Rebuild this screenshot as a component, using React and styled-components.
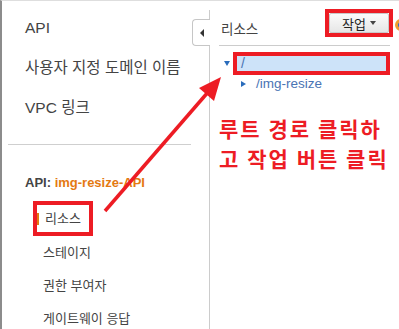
import React from 'react';
import styled, { createGlobalStyle } from 'styled-components';

const GlobalStyle = createGlobalStyle`
  body {
    margin: 0;
    overflow: hidden;
    background: #fff;
    font-family: "Liberation Sans", "Noto Sans CJK KR", sans-serif;
  }
`;

const RED = '#ed1c24';

const Page = styled.div`
  position: relative;
  display: flex;
  width: 399px;
  height: 329px;
  box-sizing: border-box;
  border-top: 1px solid #dedede;
  border-left: 2px solid #8c8c8c;
  overflow: hidden;
`;

const Sidebar = styled.nav`
  width: 207px;
  flex-shrink: 0;
  padding-top: 7px;
  box-sizing: border-box;
`;

const MainLink = styled.div`
  height: 40px;
  line-height: 40px;
  padding-left: 23px;
  font-size: 15.5px;
  color: #444;
  white-space: nowrap;
`;

const Divider = styled.hr`
  margin: 16px 0 0 6px;
  width: 183px;
  border: 0;
  border-top: 1px solid #cfcfcf;
`;

const ApiTitle = styled.div`
  margin-top: 30px;
  padding-left: 23px;
  font-size: 13px;
  font-weight: bold;
  color: #444;
  white-space: nowrap;

  span {
    color: #e47911;
  }
`;

const SubList = styled.div`
  margin-top: 12px;
  display: flex;
  flex-direction: column;
`;

const SubItem = styled.div`
  height: 33px;
  display: flex;
  align-items: center;
  padding-left: 41px;
  font-size: 13px;
  color: #444;
  white-space: nowrap;
`;

const Marked = styled.div`
  margin-left: -10px;
  height: 27px;
  padding: 0 8px 0 0;
  border: 4px solid ${RED};
  display: flex;
  align-items: center;
`;

const ActiveText = styled.span`
  border-left: 2px solid #e47911;
  padding-left: 6px;
  line-height: 12px;
`;

const Main = styled.section`
  position: relative;
  flex: 1;
  margin-top: 9px;
  border-left: 1px solid #cccccc;
  padding: 0 9px 0 9px;
`;

const CollapseTab = styled.div`
  position: absolute;
  left: -18px;
  top: 9px;
  width: 17px;
  height: 25px;
  border: 1px solid #c6c6c6;
  border-right: 0;
  border-radius: 4px 0 0 4px;
  background: #fff;
  display: flex;
  align-items: center;
  justify-content: center;

  &::after {
    content: '';
    border-top: 4px solid transparent;
    border-bottom: 4px solid transparent;
    border-right: 4px solid #333;
  }
`;

const Header = styled.header`
  height: 35px;
  display: flex;
  align-items: flex-start;
  justify-content: space-between;
  border-bottom: 1px solid #cccccc;
  padding-left: 2px;
`;

const HeaderTitle = styled.h2`
  margin: 8px 0 0;
  font-size: 13.5px;
  font-weight: normal;
  color: #444;
`;

const ButtonMark = styled.div`
  margin-top: -1px;
  margin-right: -3px;
  border: 4px solid ${RED};
  display: flex;
`;

const ActionButton = styled.button`
  width: 60px;
  height: 20px;
  padding: 0;
  border: 1px solid #c9c9c9;
  border-radius: 2px;
  background: linear-gradient(#fbfbfb, #e6e6e6);
  font-family: inherit;
  font-size: 13px;
  color: #222;
  display: flex;
  align-items: center;
  justify-content: center;
  gap: 4px;

  &::after {
    content: '';
    border-left: 3.5px solid transparent;
    border-right: 3.5px solid transparent;
    border-top: 4px solid #444;
  }
`;

const StatusDot = styled.div`
  position: absolute;
  right: -8px;
  top: 9px;
  width: 12px;
  height: 12px;
  border-radius: 50%;
  background: radial-gradient(circle, #2f6fc6 0 2.5px, #f0a030 3.5px);
`;

const Tree = styled.div`
  padding-top: 6px;
`;

const TreeRow = styled.div`
  display: flex;
  align-items: center;
  height: ${p => p.$h}px;
  padding-left: ${p => p.$indent}px;
`;

const Caret = styled.span`
  width: 0;
  height: 0;
  margin-right: ${p => p.$gap}px;
  ${p => p.$open
    ? `border-left: 3.5px solid transparent; border-right: 3.5px solid transparent; border-top: 5px solid #2a6cbb;`
    : `border-top: 3.5px solid transparent; border-bottom: 3.5px solid transparent; border-left: 5px solid #2a6cbb;`}
`;

const SelectedMark = styled.div`
  flex: 1;
  height: 15px;
  border: 4px solid ${RED};
  display: flex;
`;

const SelectedNode = styled.div`
  flex: 1;
  background: #cde3f9;
  padding-left: 4px;
  font-size: 14px;
  line-height: 15px;
  color: #4a74b4;
`;

const NodeLabel = styled.span`
  font-size: 13.5px;
  color: #4a74b4;
`;

const Note = styled.p`
  margin: 23px 0 0;
  font-size: 21px;
  font-weight: bold;
  line-height: 30px;
  color: ${RED};
  letter-spacing: 2px;
  word-spacing: -1px;
  white-space: nowrap;
`;

const Overlay = styled.svg`
  position: absolute;
  left: -2px;
  top: -1px;
  pointer-events: none;
`;

export default function App() {
  return (
    <>
      <GlobalStyle />
      <Page>
        <Sidebar>
          <MainLink>API</MainLink>
          <MainLink>사용자 지정 도메인 이름</MainLink>
          <MainLink>VPC 링크</MainLink>
          <Divider />
          <ApiTitle>
            API: <span>img-resize-API</span>
          </ApiTitle>
          <SubList>
            <SubItem>
              <Marked>
                <ActiveText>리소스</ActiveText>
              </Marked>
            </SubItem>
            <SubItem>스테이지</SubItem>
            <SubItem>권한 부여자</SubItem>
            <SubItem>게이트웨이 응답</SubItem>
          </SubList>
        </Sidebar>

        <Main>
          <CollapseTab />
          <Header>
            <HeaderTitle>리소스</HeaderTitle>
            <ButtonMark>
              <ActionButton>작업</ActionButton>
            </ButtonMark>
          </Header>
          <StatusDot />
          <Tree>
            <TreeRow $h={23} $indent={5}>
              <Caret $open $gap={3} />
              <SelectedMark>
                <SelectedNode>/</SelectedNode>
              </SelectedMark>
            </TreeRow>
            <TreeRow $h={17} $indent={22}>
              <Caret $gap={10} />
              <NodeLabel>/img-resize</NodeLabel>
            </TreeRow>
          </Tree>
          <Note>
            루트 경로 클릭하
            <br />
            고 작업 버튼 클릭
          </Note>
        </Main>

        <Overlay width="399" height="329" viewBox="0 0 399 329">
          <line x1="105" y1="211" x2="209" y2="91" stroke={RED} strokeWidth="3.5" />
          <polygon points="221,77 214,101 199,88" fill={RED} />
        </Overlay>
      </Page>
    </>
  );
}
